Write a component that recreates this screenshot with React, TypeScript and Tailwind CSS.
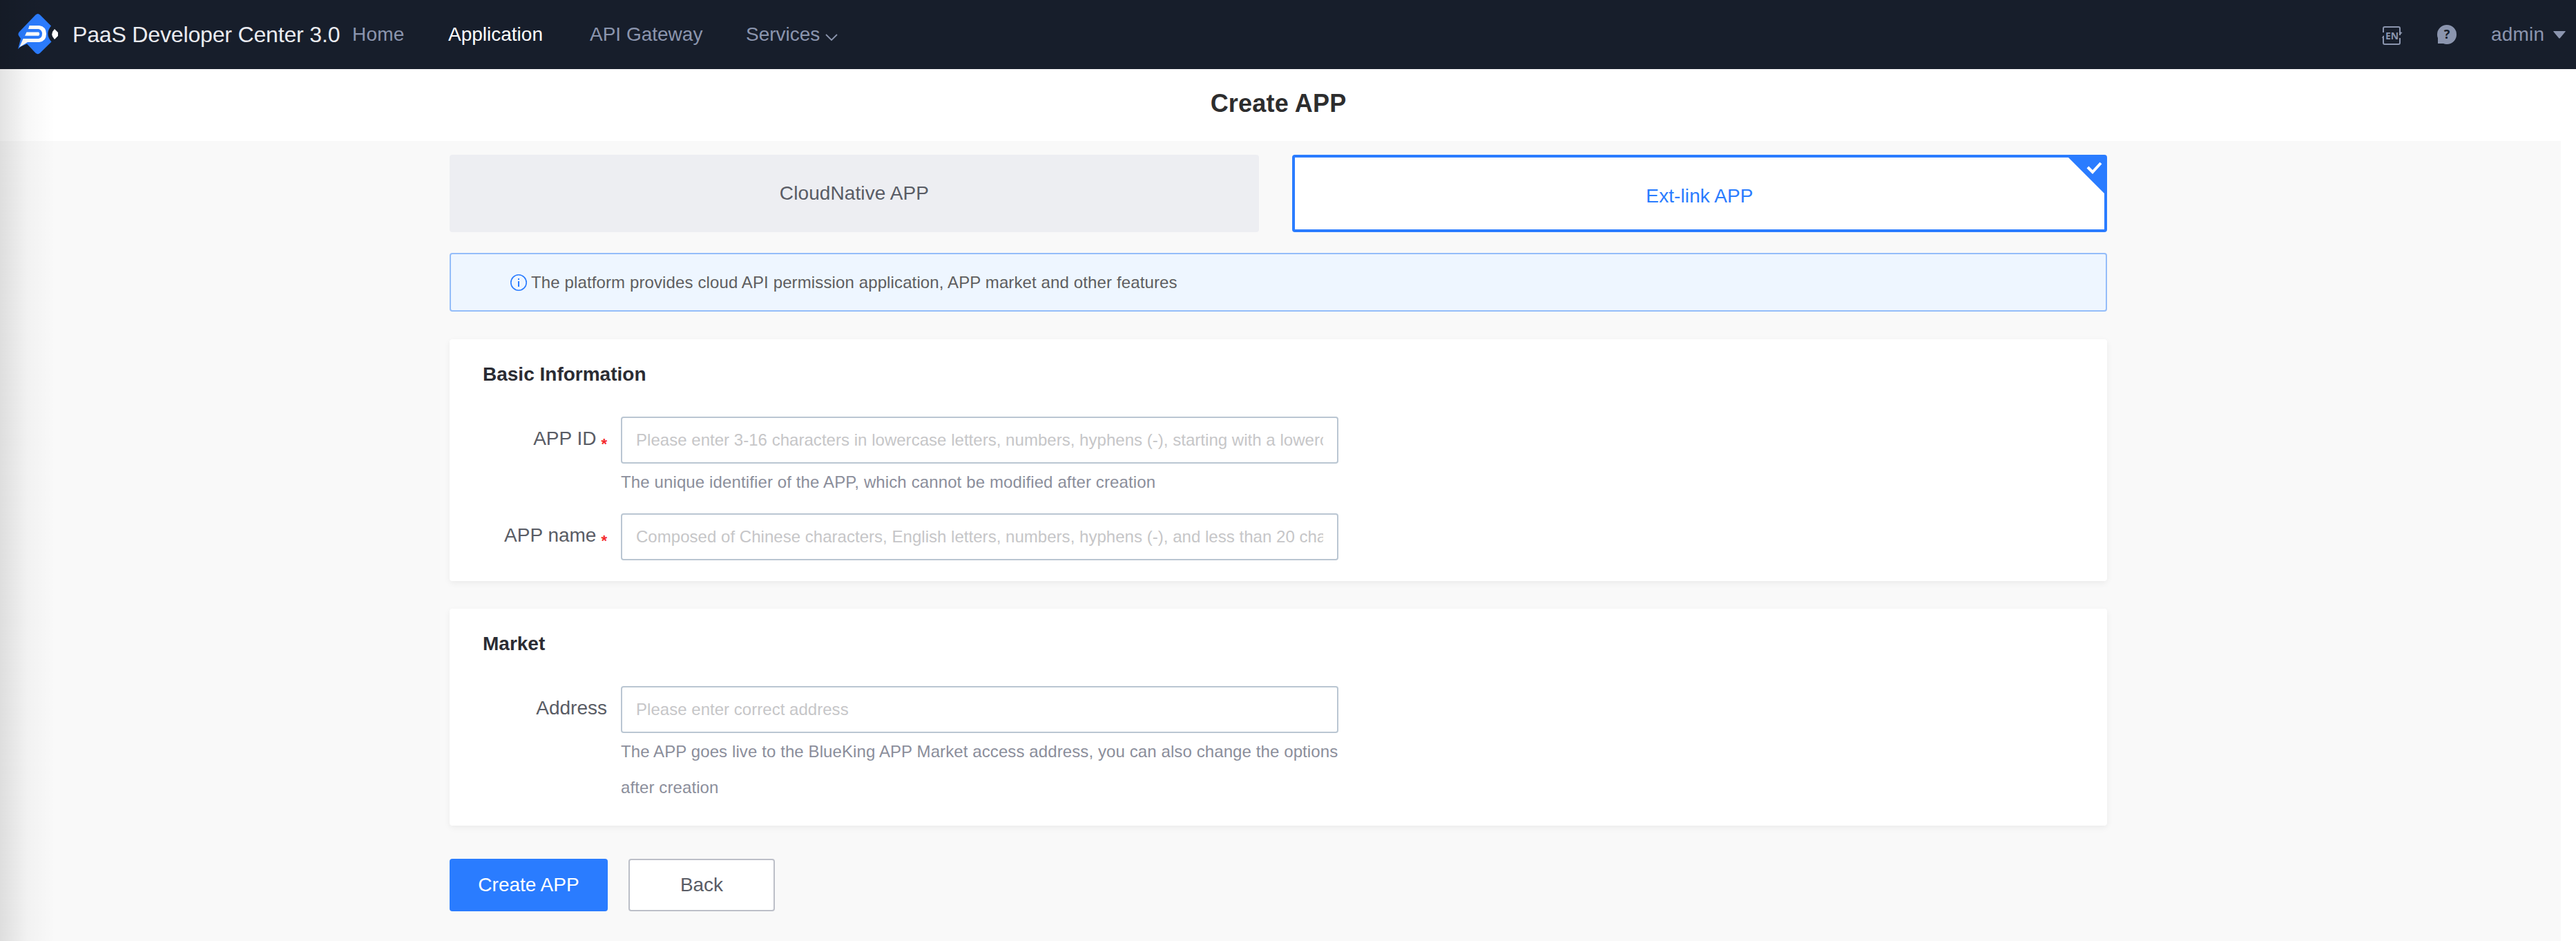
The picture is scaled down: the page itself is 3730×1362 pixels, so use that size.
import React from "react";

function Logo() {
  return (
    <svg width="60" height="60" viewBox="26 20 60 60" className="shrink-0">
      <path d="M51.5 21.5Q54.800 18.5 58 21.5L74 37.500Q64.500 49 74.500 60.500L58 76.800Q54.800 79.500 51.500 76.800L39 63.500L30 67.500L26 71L30 56L27 51.500Q25.500 49 28 46Z" fill="#2b7cff" />
      <path d="M42.500 37H57Q67 38.500 67 49T57 61H40L28 68.500L33.500 56H56Q61 54.500 61 49T56 42H41Z" fill="#fff" />
      <path d="M38.500 46.500H56Q58.500 49 56 51.800H36Z" fill="#fff" />
      <path d="M79 42L84 47V52L79 57Q71.500 49.500 79 42Z" fill="#fff" />
    </svg>
  );
}

function Header() {
  return (
    <header className="flex h-[100px] items-center bg-[#171e2b] pl-[26px] text-[28px] leading-[40px] text-[#8b95ae]">
      <Logo />
      <span className="ml-[19px] w-[405px] text-[32px] tracking-[-0.16px] whitespace-nowrap text-[#eaebf0]">PaaS Developer Center 3.0</span>
      <nav className="flex items-center whitespace-nowrap">
        <a className="w-[139px] tracking-[0.2px]">Home</a>
        <a className="w-[205px] text-white">Application</a>
        <a className="w-[226px]">API Gateway</a>
        <a className="w-[115px]">Services</a>
        <svg width="18" height="11" viewBox="0 0 18 11" fill="none" stroke="#8b95ae" strokeWidth="1.800" className="mt-2">
          <path d="M1 1L9 9L17 1" />
        </svg>
      </nav>
      <div className="ml-auto flex items-center">
        <svg width="30" height="28" viewBox="0 0 30 28" className="mr-[50px] mt-1">
          <path d="M2 9V3Q2 1 4 1H24Q26 1 26 3V13M26 17V24Q26 26 24 26H4Q2 26 2 24V14" fill="none" stroke="#8b95ae" strokeWidth="2" />
          <path d="M26 8L29.500 9L26 13ZM3 13L-0.500 17H3Z" fill="#8b95ae" />
          <text x="14.500" y="19" textAnchor="middle" fontSize="14" fontWeight="700" fill="#8b95ae" fontFamily="Noto Sans, sans-serif">EN</text>
        </svg>
        <svg width="28" height="28" viewBox="0 0 28 28" className="mr-[50px]">
          <path d="M14 0A14 14 0 1 1 14 28Q11 28 9 27H1V19Q0 17 0 14A14 14 0 0 1 14 0Z" fill="#8b95ae" />
          <text x="14" y="20" textAnchor="middle" fontSize="18" fontWeight="700" fill="#171e2b" fontFamily="Noto Sans, sans-serif">?</text>
        </svg>
        <span className="w-[90px] tracking-[0.2px]">admin</span>
        <svg width="18" height="11" viewBox="0 0 18 11" className="mr-[15px]">
          <path d="M1 0H17Q18.500 0 17.500 1L10 10Q9 11 8 10L0.500 1Q-0.500 0 1 0Z" fill="#8b95ae" />
        </svg>
      </div>
    </header>
  );
}

function Field({ label, required, placeholder, children }: { label: string; required?: boolean; placeholder: string; children?: React.ReactNode }) {
  return (
    <div className="flex">
      <div className="flex h-[68px] w-[228px] shrink-0 justify-end pt-[12px] text-[28px] leading-[40px] text-[#595c65]">
        {label}
        {required && <span className="ml-[7px] pt-[8px] text-[22px] font-bold text-[#f5282a]">*</span>}
      </div>
      <div className="ml-[20px] w-[1039px]">
        <input
          className="block h-[68px] w-full rounded-[4px] border-2 border-[#bac6d2] bg-white px-[20px] text-[24px] tracking-[0.03px] placeholder:text-[#c6c6c8]"
          placeholder={placeholder}
        />
        {children}
      </div>
    </div>
  );
}

function Card({ title, className, children }: { title: string; className: string; children: React.ReactNode }) {
  return (
    <section className={className}>
      <h2 className="pl-[48px] text-[28px] leading-[40px] font-bold text-[#2b2c33]">{title}</h2>
      {children}
    </section>
  );
}

export default function App() {
  return (
    <div className="relative h-[1362px] w-[3730px] overflow-hidden bg-white font-['Liberation_Sans',sans-serif]">
      <Header />
      <h1 className="flex h-[104px] w-[3702px] items-center justify-center pb-[5px] text-[36px] font-bold tracking-[0.2px] text-[#2d2d2e]">Create APP</h1>
      <main className="h-[1158px] w-[3708px] bg-[#f9f9f9] pt-[20px] pl-[651px]">
        <div className="w-[2400px]">
          <div className="flex justify-between text-[28px] tracking-[0.1px]">
            <div className="flex h-[112px] w-[1172px] items-center justify-center rounded-[4px] bg-[#edeef2] text-[#595c65]">CloudNative APP</div>
            <div className="relative flex h-[112px] w-[1180px] items-center justify-center rounded-[4px] border-4 border-[#2a7cff] bg-white pt-2 text-[#2a7cff]">
              Ext-link APP
              <svg width="52" height="52" viewBox="0 0 52 52" className="absolute top-0 right-0">
                <path d="M0 0H52V52Z" fill="#2a7cff" />
                <path d="M28 14L35 21L47 8" fill="none" stroke="#fff" strokeWidth="4" />
              </svg>
            </div>
          </div>
          <div className="mt-[30px] flex h-[85px] items-center rounded-[4px] border-2 border-[#94bdf9] bg-[#eef6ff] pl-[86px] text-[24px] tracking-[0.12px] text-[#5e5e60]">
            <svg width="24" height="24" viewBox="0 0 24 24" className="mr-[6px]">
              <circle cx="12" cy="12" r="11.200" fill="none" stroke="#2a7cff" strokeWidth="1.600" />
              <path d="M11 6H13V8H11ZM11 10H13V18H11Z" fill="#2a7cff" />
            </svg>
            The platform provides cloud API permission application, APP market and other features
          </div>
          <Card title="Basic Information" className="mt-[40px] h-[350px] rounded-[4px] bg-white pt-[31px] shadow-[0_3px_10px_rgba(0,0,0,0.06)]">
            <div className="mt-[41px]">
              <Field label="APP ID" required placeholder="Please enter 3-16 characters in lowercase letters, numbers, hyphens (-), starting with a lowercase letter">
                <p className="mt-px h-[71px] text-[24px] leading-[52px] tracking-[0.12px] text-[#8b8e9b]">The unique identifier of the APP, which cannot be modified after creation</p>
              </Field>
              <Field label="APP name" required placeholder="Composed of Chinese characters, English letters, numbers, hyphens (-), and less than 20 characters" />
            </div>
          </Card>
          <Card title="Market" className="mt-[40px] h-[314px] rounded-[4px] bg-white pt-[31px] shadow-[0_3px_10px_rgba(0,0,0,0.06)]">
            <div className="mt-[41px]">
              <Field label="Address" placeholder="Please enter correct address">
                <p className="mt-px text-[24px] leading-[52px] tracking-[0.1px] whitespace-nowrap text-[#8b8e9b]">
                  The APP goes live to the BlueKing APP Market access address, you can also change the options
                  <br />
                  after creation
                </p>
              </Field>
            </div>
          </Card>
          <div className="mt-[48px] flex gap-[30px] text-[28px]">
            <button className="h-[76px] w-[229px] rounded-[4px] bg-[#2a7cff] text-white">Create APP</button>
            <button className="h-[76px] w-[212px] rounded-[4px] border-2 border-[#bcbfc8] bg-white text-[#595c65]">Back</button>
          </div>
        </div>
      </main>
      <div className="pointer-events-none absolute top-0 left-0 h-full w-[80px] bg-linear-to-r from-black/11 via-black/3 to-transparent" />
    </div>
  );
}
